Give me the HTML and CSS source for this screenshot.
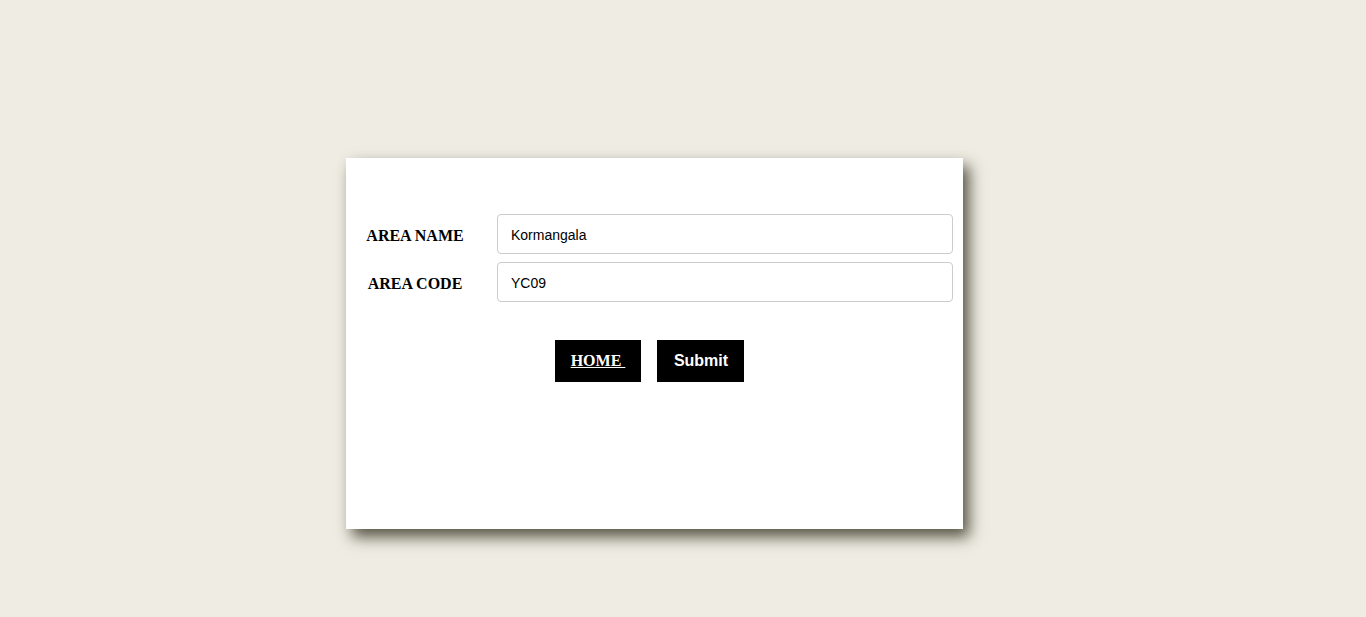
FILE: index.html
```html
<!DOCTYPE html>
<html>
<head>
<meta charset="utf-8">
<link rel="stylesheet" href="styles.css">
</head>
<body>
<div class="card">
  <form class="form">
    <div class="row">
      <label class="label">AREA NAME</label>
      <input class="field" type="text" value="Kormangala">
    </div>
    <div class="row">
      <label class="label">AREA CODE</label>
      <input class="field" type="text" value="YC09">
    </div>
    <div class="actions">
      <a class="btn btn-home" href="#">HOME </a>
      <button class="btn btn-submit" type="button">Submit</button>
    </div>
  </form>
</div>
</body>
</html>
```
FILE: styles.css
```css
html, body {
  margin: 0;
  padding: 0;
  background: #efece3;
}
body {
  height: 617px;
  overflow: hidden;
}
.card {
  margin: 158px 0 0 346px;
  width: 617px;
  height: 371px;
  box-sizing: border-box;
  background: #fff;
  box-shadow: 6px 8px 14px rgba(60, 58, 40, 0.85);
  padding: 56px 10px 0 0;
}
.form {
  display: flex;
  flex-direction: column;
  gap: 8px;
}
.row {
  display: flex;
  align-items: center;
  gap: 13px;
}
.label {
  width: 138px;
  padding-top: 3px;
  text-align: center;
  font-family: "Liberation Serif", "Times New Roman", serif;
  font-weight: bold;
  font-size: 16px;
  color: #000;
}
.field {
  width: 456px;
  height: 40px;
  box-sizing: border-box;
  border: 1px solid #ccc;
  border-radius: 4px;
  padding: 1px 13px 0;
  font-family: "Liberation Sans", Arial, sans-serif;
  font-size: 14px;
  color: #000;
  background: #fff;
  outline: none;
}
.actions {
  display: flex;
  justify-content: center;
  gap: 16px;
  margin-top: 30px;
}
.btn {
  height: 42px;
  box-sizing: border-box;
  background: #000;
  color: #fff;
  border: none;
  display: flex;
  align-items: center;
  justify-content: center;
  padding: 0 16px;
  font-weight: bold;
  font-size: 16px;
}
.btn-home {
  width: 86px;
  font-family: "Liberation Serif", "Times New Roman", serif;
  text-decoration: underline;
  white-space: pre;
}
.btn-submit {
  width: 87px;
  padding-left: 17px;
  font-family: "Liberation Sans", Arial, sans-serif;
}
```
